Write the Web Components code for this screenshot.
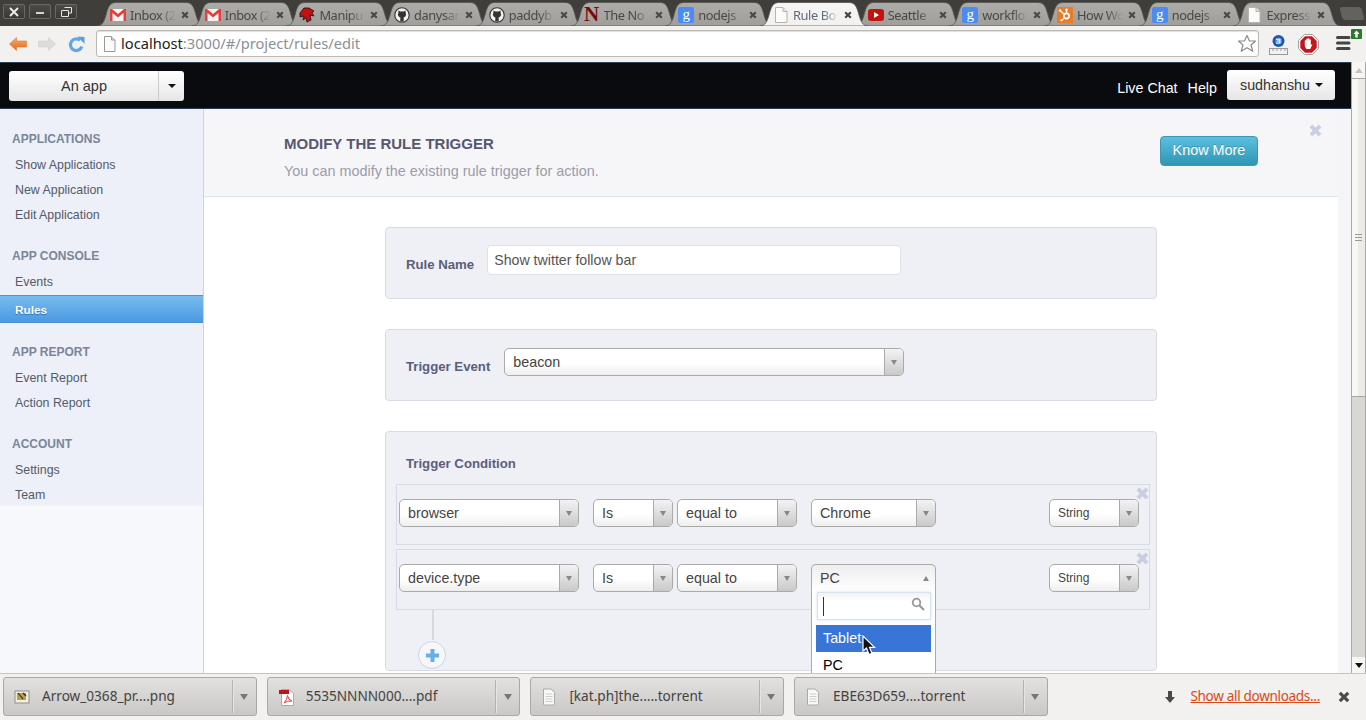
<!DOCTYPE html>
<html lang="en"><head><meta charset="utf-8"><title>Rule Box</title>
<style>
html,body{margin:0;height:720px;overflow:hidden;background:#f2f1f0}
body{display:flex;flex-direction:column;width:1366px;font-family:"Liberation Sans",Arial,sans-serif}
</style></head><body>
<x-tabstrip>
  <x-tab label="Inbox (2" icon="gmail"></x-tab>
  <x-tab label="Inbox (2" icon="gmail"></x-tab>
  <x-tab label="Manipu" icon="dragon"></x-tab>
  <x-tab label="danysar" icon="github"></x-tab>
  <x-tab label="paddyb" icon="github"></x-tab>
  <x-tab label="The No" icon="n"></x-tab>
  <x-tab label="nodejs" icon="g"></x-tab>
  <x-tab label="Rule Bo" icon="page" active></x-tab>
  <x-tab label="Seattle" icon="yt"></x-tab>
  <x-tab label="workflo" icon="g"></x-tab>
  <x-tab label="How Wo" icon="hub"></x-tab>
  <x-tab label="nodejs" icon="g"></x-tab>
  <x-tab label="Express" icon="page"></x-tab>
</x-tabstrip>
<x-toolbar></x-toolbar>
<x-viewport>
  <x-navbar></x-navbar>
  <x-shell>
    <x-sidebar slot="side">
      <x-side-group title="APPLICATIONS">
        <x-side-item>Show Applications</x-side-item>
        <x-side-item>New Application</x-side-item>
        <x-side-item>Edit Application</x-side-item>
      </x-side-group>
      <x-side-group title="APP CONSOLE">
        <x-side-item>Events</x-side-item>
        <x-side-item active>Rules</x-side-item>
      </x-side-group>
      <x-side-group title="APP REPORT">
        <x-side-item>Event Report</x-side-item>
        <x-side-item>Action Report</x-side-item>
      </x-side-group>
      <x-side-group title="ACCOUNT">
        <x-side-item>Settings</x-side-item>
        <x-side-item>Team</x-side-item>
      </x-side-group>
    </x-sidebar>
    <x-hero></x-hero>
    <x-form-area>
      <x-card h="72">
        <x-field label="Rule Name" style="padding:17px 0 0 20px;--label-top:11px;--label-gap:13px"><x-textbox>Show twitter follow bar</x-textbox></x-field>
      </x-card>
      <x-card h="72">
        <x-field label="Trigger Event" style="padding:18px 0 0 20px;--label-top:10px;--label-gap:14px"><x-select style="width:400px">beacon</x-select></x-field>
      </x-card>
      <x-card h="240">
        <x-cond-title>Trigger Condition</x-cond-title>
        <x-cond-row>
          <x-select style="width:180px">browser</x-select>
          <x-select style="width:80px;margin-left:14px">Is</x-select>
          <x-select style="width:120px;margin-left:4px">equal to</x-select>
          <x-select style="width:125px;margin-left:14px">Chrome</x-select>
          <x-select small style="width:90px;margin-left:auto">String</x-select>
        </x-cond-row>
        <x-cond-row>
          <x-select style="width:180px">device.type</x-select>
          <x-select style="width:80px;margin-left:14px">Is</x-select>
          <x-select style="width:120px;margin-left:4px">equal to</x-select>
          <x-select open style="width:125px;margin-left:14px">PC</x-select>
          <x-select small style="width:90px;margin-left:auto">String</x-select>
        </x-cond-row>
        <x-add-cond></x-add-cond>
      </x-card>
    </x-form-area>
  </x-shell>
  <x-scrollbar></x-scrollbar>
</x-viewport>
<x-dlbar>
  <x-dl icon="img">Arrow_0368_pr....png</x-dl>
  <x-dl icon="pdf">5535NNNN000....pdf</x-dl>
  <x-dl icon="doc">[kat.ph]the.....torrent</x-dl>
  <x-dl icon="doc">EBE63D659....torrent</x-dl>
</x-dlbar>
<script>
function def(name,render){
  customElements.define(name,class extends HTMLElement{
    constructor(){super();this.attachShadow({mode:'open'})}
    connectedCallback(){this.shadowRoot.innerHTML=render(this)}
  });
}
const UI='"Noto Sans","Open Sans",sans-serif';
const XICON=(c,s=10,w=2.6)=>`<svg width="${s}" height="${s}" viewBox="0 0 10 10" style="display:block"><path d="M1.500 1.500L8.500 8.500M8.500 1.500L1.500 8.500" stroke="${c}" stroke-width="${w}" fill="none"/></svg>`;
const PAGE=`<svg width="16" height="16" viewBox="0 0 16 16" style="display:block"><path d="M2.500 .5H10L14 4.500V15.500H2.500Z" fill="#fbfbfa" stroke="#b4b4b0"/><path d="M10 .5V4.500H14" fill="#e4e4e2" stroke="#b4b4b0"/></svg>`;
const ICONS={
 gmail:`<svg width="16" height="16" viewBox="0 0 16 16" style="display:block"><rect y="2" width="16" height="12" fill="#f4f4f4"/><path d="M0 2H2L8 7L14 2H16V14H13.500V6L8 10.500L2.500 6V14H0Z" fill="#e2403a"/></svg>`,
 dragon:`<svg width="16" height="16" viewBox="0 0 16 16" style="display:block"><path d="M1 6L5 1L10 1L15 4L13 6L15 9L11 8L12 13L8 15L7 11L4 13L5 9L1 10Z" fill="#c41010" stroke="#111" stroke-width=".8"/></svg>`,
 github:`<svg width="16" height="16" viewBox="0 0 16 16" style="display:block"><circle cx="8" cy="8" r="7.200" fill="#f2f1f0" stroke="#333" stroke-width="1.100"/><path d="M4.500 3.500L6.300 4.600Q8 4.200 9.700 4.600L11.500 3.500L11.700 6Q12.500 7.500 11.700 9Q10.800 10.300 9.600 10.500L9.800 14.500H6.200L6.400 10.500Q5.200 10.300 4.300 9Q3.500 7.500 4.300 6Z" fill="#333"/></svg>`,
 n:`<span style="display:block;width:16px;height:16px;margin-top:-2px;font:bold 21px/18px 'Liberation Serif',serif;color:#7a0a0a;text-align:center">N</span>`,
 g:`<span style="display:block;width:16px;height:16px;border-radius:2px;background:#4a8cf3;font:15px/15px 'Liberation Serif',serif;color:#fff;text-align:center">g</span>`,
 page:PAGE,
 yt:`<svg width="16" height="16" viewBox="0 0 16 16" style="display:block"><rect y="2" width="16" height="12" rx="3" fill="#c5120f"/><path d="M6 5L11 8L6 11Z" fill="#fff"/></svg>`,
 hub:`<svg width="16" height="16" viewBox="0 0 16 16" style="display:block"><rect width="16" height="16" fill="#ee7a26"/><circle cx="9.500" cy="9" r="2.600" fill="none" stroke="#fff" stroke-width="1.600"/><path d="M9.500 6V3M7.500 7.500L3.500 4M7.600 11L5 13" stroke="#fff" stroke-width="1.400"/><circle cx="9.500" cy="2.800" r="1.200" fill="#fff"/><circle cx="3" cy="3.500" r="1.200" fill="#fff"/><circle cx="4.500" cy="13.200" r="1.100" fill="#fff"/></svg>`
};
def('x-tabstrip',()=>`<style>
:host{display:flex;flex:0 0 26px;height:26px;background:#3f3e3a;box-sizing:border-box;position:relative;overflow:hidden}
.wb{display:flex;gap:4px;padding:4px 0 0 3px;flex:0 0 auto;margin-right:20px}
.b{width:22px;height:15px;box-sizing:border-box;border:1px solid #6a6964;border-radius:2px;background:linear-gradient(#4c4b47,#3a3935);display:flex;align-items:center;justify-content:center}
.new{width:22px;height:13px;margin:7px 0 0 13px;background:#63625e;transform:skewX(15deg);border-radius:3px;flex:0 0 auto}
</style><div class="wb">
<div class="b"><svg width="10" height="10" viewBox="0 0 10 10"><path d="M1 1L9 9M9 1L1 9" stroke="#f0efec" stroke-width="1.800"/></svg></div>
<div class="b"><svg width="10" height="10" viewBox="0 0 10 10"><path d="M1 6H9" stroke="#e8e7e3" stroke-width="1.800"/></svg></div>
<div class="b"><svg width="11" height="10" viewBox="0 0 11 10"><path d="M3.500 .5H10.500V6H7.500M.5 3.500H7.500V9.500H.5Z" fill="none" stroke="#e8e7e3"/></svg></div>
</div><slot></slot><div class="new"></div>`);
def('x-tab',h=>{const a=h.hasAttribute('active');return `<style>
:host{display:block;position:relative;flex:0 0 108px;width:108px;height:24px;margin:2px -13.3px 0 0;${a?'z-index:3':''}}
svg.bg{position:absolute;inset:0;width:108px;height:24px}
.in{position:relative;display:flex;align-items:center;height:24px;padding:2px 0 0 13px;box-sizing:border-box}
.ic{flex:0 0 16px;width:16px;height:16px;margin-right:4px}
.t{flex:0 0 46px;width:46px;overflow:hidden;white-space:nowrap;font:12.800px/22px ${UI};letter-spacing:-.4px;color:${a?'#5d6a7c':'#4a4843'};-webkit-mask-image:linear-gradient(90deg,#000 65%,transparent);mask-image:linear-gradient(90deg,#000 65%,transparent)}
.x{margin-left:5px}
</style><svg class="bg" viewBox="0 0 108 24" preserveAspectRatio="none"><defs><linearGradient id="tg" x1="0" y1="0" x2="0" y2="1"><stop offset="0" stop-color="${a?'#f6f5f4':'#aeaca8'}"/><stop offset="1" stop-color="${a?'#f2f1f0':'#a09e9a'}"/></linearGradient></defs><path d="M0 24C5 24 7 20 9 13C11 5 13 .5 19 .5H89C95 .5 97 5 99 13C101 20 103 24 108 24Z" fill="url(#tg)" stroke="#55544f" stroke-width=".8"/></svg>
<div class="in"><span class="ic">${ICONS[h.getAttribute('icon')]||''}</span><span class="t">${h.getAttribute('label')}</span><span class="x">${XICON(a?'#444':'#4a4843',8)}</span></div>`});
def('x-toolbar',()=>`<style>
:host{display:flex;flex:0 0 36px;height:36px;background:#f2f1f0;align-items:center;box-sizing:border-box;position:relative}
.nav{display:flex;flex:0 0 96px;align-items:center;padding-left:9px;box-sizing:border-box;gap:11px}
.omni{flex:0 0 1163px;height:27px;align-self:flex-start;margin-top:4px;box-sizing:border-box;background:#fff;border:1px solid #bdbab5;border-radius:3px;display:flex;align-items:center;padding-left:6px;box-shadow:inset 0 1px 1px #ddd}
.u{font:14.650px/25px ${UI};color:#222;white-space:nowrap;padding-left:5px}.u i{font-style:normal;color:#8a909a}
.star{margin-left:auto;margin-right:1px}
.ext{display:flex;align-items:center;margin-left:9px}
</style>
<div class="nav">
<svg width="18" height="16" viewBox="0 0 18 16"><defs><linearGradient id="o" x1="0" y1="0" x2="0" y2="1"><stop offset="0" stop-color="#f7b06a"/><stop offset="1" stop-color="#e0671c"/></linearGradient></defs><path d="M.5 8L7.500 1.500V5H17.500V11H7.500V14.500Z" fill="url(#o)" stroke="#d9782c" stroke-width=".6" stroke-linejoin="round"/></svg>
<svg width="18" height="16" viewBox="0 0 18 16"><path d="M17.500 8L10.500 1.500V5H.5V11H10.500V14.500Z" fill="#dddcda" stroke="#d2d1cf" stroke-width=".6" stroke-linejoin="round"/></svg>
<svg width="17" height="17" viewBox="0 0 17 17" style="margin-left:1px"><path d="M13.800 10.500A5.800 5.800 0 1 1 12 4.300" fill="none" stroke="#62a6e4" stroke-width="3.200"/><path d="M9.500 .5L16.500 1V8Z" fill="#5a9ee0"/></svg>
</div>
<div class="omni"><svg width="13" height="16" viewBox="0 0 13 16"><path d="M1.500 .5H8.500L12 4V15.500H1.500Z" fill="#fbfbfa" stroke="#999"/><path d="M8.500 .5V4H12" fill="#ddd" stroke="#999"/></svg><span class="u">localhost<i>:3000/#/project/rules/edit</i></span>
<svg class="star" width="20" height="19" viewBox="0 0 20 19"><path d="M10 1.500L12.500 7H18.500L14 11L15.800 17.300L10 13.800L4.200 17.300L6 11L1.500 7H7.500Z" fill="#fff" stroke="#8a8a86" stroke-width="1.200" stroke-linejoin="round"/></svg></div>
<div class="ext">
<svg width="21" height="21" viewBox="0 0 21 21" style="margin-top:2px"><circle cx="10.500" cy="6" r="6" fill="#1c56a6"/><circle cx="10.500" cy="6" r="3.600" fill="#3f86d8"/><path d="M8 3.800H12.500V8.500H8V7.500H11.200V6.500H8.800V5.500H11.200V4.800H8Z" fill="#fff"/><path d="M1 13.500H20M1 19.500H20" stroke="#9a9a96"/><path d="M1.500 13V20M19.500 13V20M5 14V16M9 14V16M13 14V16M17 14V16" stroke="#9a9a96"/></svg>
<svg width="21" height="21" viewBox="0 0 21 21" style="margin-left:9px"><path d="M6.500 .5H14.500L20.500 6.500V14.500L14.500 20.500H6.500L.5 14.500V6.500Z" fill="#fff" stroke="#8c8c8c" stroke-width=".8"/><path d="M7 2.300H14L18.700 7V14L14 18.700H7L2.300 14V7Z" fill="#c8141c"/><path d="M6.800 9.500V6.500Q7.600 5.500 8.300 6.500V5Q9.100 4 9.800 5V4.600Q10.600 3.800 11.300 4.600V5.500Q12.100 4.800 12.800 5.700V11Q13.800 10 14.300 10.500L12.300 15H8.300L6.800 12Z" fill="#fff"/></svg>
<svg width="28" height="36" viewBox="0 0 28 36" style="margin-left:17px;flex:0 0 28px"><path d="M1.500 11.500H13M1.500 17H13M1.500 22.500H13" stroke="#444" stroke-width="3" stroke-linecap="round"/><rect x="15" y="3" width="11" height="10" rx="1" fill="#2c7a2c"/><path d="M20.500 4.500L23.500 8H21.700V11.500H19.300V8H17.500Z" fill="#fff"/></svg>
</div>`);
def('x-viewport',()=>`<style>:host{display:flex;flex:0 0 611px;height:611px;position:relative;overflow:hidden;background:#f5f5f7}
.main{flex:0 0 1351px;width:1351px;display:flex;flex-direction:column;min-width:0;overflow:hidden}
</style><div class="main"><slot></slot></div>`);
def('x-navbar',()=>`<style>
:host{display:flex;flex:0 0 47px;height:47px;box-sizing:border-box;background:#0a0b0e;border-top:1px solid #2e4058;border-bottom:1px solid #2a3a52;align-items:center;padding-left:9px;padding-right:16px;color:#fff;font:14px "Liberation Sans",sans-serif}
.grp{display:flex;height:30px;width:175px;box-sizing:border-box;border-radius:3px;background:linear-gradient(#fff,#e6e6e6);color:#333;font-size:14.500px;line-height:31px;margin-top:1px}
.main{flex:1;text-align:center;padding-left:1px;border-right:1px solid #ccc;box-sizing:border-box}
.cv{flex:0 0 25px;display:flex;align-items:center;justify-content:center}
.tri{width:0;height:0;border:4px solid transparent;border-top-color:#111;border-bottom:0}
a{color:#fff;font-size:14.300px;margin-top:4px}
.r{margin-left:auto;display:flex;align-items:center;gap:10px}
.me{margin-top:-1px;width:108px;height:30px;box-sizing:border-box;border-radius:3px;background:linear-gradient(#fff,#e6e6e6);color:#333;display:flex;align-items:center;padding-left:13px;gap:5px;font-size:14.300px}
</style><div class="grp"><div class="main">An app</div><div class="cv"><div class="tri"></div></div></div>
<div class="r"><a>Live Chat</a><a>Help</a><div class="me">sudhanshu<div class="tri"></div></div></div>`);
def('x-shell',()=>`<style>:host{display:grid;grid-template-columns:204px 1134px;grid-template-rows:auto 1fr;flex:1;min-height:0;overflow:hidden}
.s{grid-row:1/3;display:block}
</style><div class="s"><slot name="side"></slot></div><slot></slot>`);
def('x-sidebar',()=>`<style>:host{display:block;height:100%;box-sizing:border-box;border-right:1px solid #c9d3e1;background:linear-gradient(#edf0f8 396px,#f7f8fb 397px);padding-top:20px}</style><slot></slot>`);
def('x-side-group',h=>`<style>:host{display:block;margin-bottom:19px}
.t{font:bold 12px/20px "Liberation Sans",sans-serif;color:#7a8598;padding-left:12px;margin-bottom:3px}
.b{display:block}</style><div class="t">${h.getAttribute('title')}</div><div class="b"><slot></slot></div>`);
def('x-side-item',h=>h.hasAttribute('active')?`<style>:host{display:block;height:28px;margin-top:1px;box-sizing:border-box;border-top:1px solid #4d94d8;border-bottom:1px solid #4a8fd4;background:linear-gradient(#76bcee,#4c99e2);padding-left:15px;font:bold 11.800px/28px "Liberation Sans",sans-serif;color:#fff;text-shadow:0 1px 1px #2f6fb0}</style><slot></slot>`:`<style>:host{display:block;height:25px;padding-left:15px;font:12.400px/27px "Liberation Sans",sans-serif;color:#555a6a;white-space:nowrap}</style><slot></slot>`);
def('x-hero',()=>`<style>:host{display:block;position:relative;height:88px;box-sizing:border-box;background:#f6f6f9;border-bottom:1px solid #d9e6ec;padding:26px 0 0 80px}
h1{margin:0;font:bold 15px/18px "Liberation Sans",sans-serif;color:#55586f}
p{margin:9px 0 0;font:14.400px/18px "Liberation Sans",sans-serif;color:#9a9ca9}
.btn{position:absolute;left:956px;top:27px;width:98px;height:30px;box-sizing:border-box;border:1px solid #3f97b3;border-radius:4px;background:linear-gradient(#5cbfe0,#2f96b4);color:#fff;font:14.400px/26px "Liberation Sans",sans-serif;text-align:center;text-shadow:0 -1px 0 rgba(0,0,0,.2)}
.x{position:absolute;left:1105px;top:15px}
</style><h1>MODIFY THE RULE TRIGGER</h1><p>You can modify the existing rule trigger for action.</p><div class="btn">Know More</div><div class="x">${XICON('#c9cfe0',13,3)}</div>`);
def('x-form-area',()=>`<style>:host{display:flex;flex-direction:column;gap:30px;padding:30px 0 0 181px;background:#fff;height:100%;box-sizing:border-box}</style><slot></slot>`);
def('x-card',h=>`<style>:host{display:block;position:relative;flex:0 0 ${h.getAttribute('h')}px;height:${h.getAttribute('h')}px;width:772px;box-sizing:border-box;background:#eff0f5;border:1px solid #d8dae4;border-radius:4px;padding:0 6px 0 10px}</style><slot></slot>`);
def('x-field',h=>`<style>:host{display:flex;align-items:flex-start;margin-left:-10px}
label{font:bold 13.200px/18px "Liberation Sans",sans-serif;color:#5a5e7e;margin-top:var(--label-top);margin-right:var(--label-gap);white-space:nowrap}</style><label>${h.getAttribute('label')}</label><slot></slot>`);
def('x-textbox',()=>`<style>:host{display:block;width:414px;height:30px;box-sizing:border-box;background:#fff;border:1px solid #dfe1e8;border-radius:4px;font:14.200px/28px "Liberation Sans",sans-serif;color:#555;padding-left:6px}</style><slot></slot>`);
def('x-select',h=>{const sm=h.hasAttribute('small'),op=h.hasAttribute('open');return `<style>
:host{display:block;position:relative;height:28px;flex:0 0 auto;font:${sm?'12px':'14.300px'}/26px "Liberation Sans",sans-serif;color:#444}
.box{display:flex;height:28px;box-sizing:border-box;border:1px solid #aaa;border-radius:5px;background:${op?'linear-gradient(#eee,#fff)':'linear-gradient(#fff 55%,#eee)'};${op?'border-bottom:0;border-radius:5px 5px 0 0':''}}
.v{flex:1;padding-left:8px;white-space:nowrap;overflow:hidden}
.ar{flex:0 0 18px;display:flex;align-items:center;justify-content:center;${op?'':'border-left:1px solid #aaa;background:linear-gradient(#f3f3f3,#c9c9c9);border-radius:0 4px 4px 0'}}
.c{width:0;height:0;border:3.500px solid transparent;${op?'border-bottom:5px solid #888;border-top:0':'border-top:5px solid #888;border-bottom:0'}}
.drop{position:absolute;left:0;top:28px;width:100%;height:120px;box-sizing:border-box;background:#fff;border:1px solid #aaa;border-top:0;padding:0 4px;font-size:14.300px}
.s{height:28px;box-sizing:border-box;margin:0 0 5px 1px;border:1px solid #d4e4f0;box-shadow:0 0 3px #cfe3f5;background:linear-gradient(#f2f2f2,#fff 30%);position:relative}
.caret{position:absolute;left:5px;top:4px;width:1px;height:19px;background:#333}
.mag{position:absolute;right:5px;top:4px}
.o{height:27px;line-height:26px;padding-left:7px;color:#000}
.o.on{background:#3875d7;color:#fff}
.cur{position:absolute;left:50px;top:43px;z-index:2}
</style><div class="box"><div class="v"><slot></slot></div><div class="ar"><div class="c"></div></div></div>
${op?`<div class="drop"><div class="s"><div class="caret"></div><svg class="mag" width="14" height="14" viewBox="0 0 14 14"><circle cx="5.500" cy="5.500" r="3.800" fill="none" stroke="#999" stroke-width="1.800"/><path d="M8.500 8.500L13 13" stroke="#999" stroke-width="2.200"/></svg></div><div class="o on">Tablet</div><div class="o">PC</div><svg class="cur" width="14" height="21" viewBox="0 0 14 21"><path d="M1 1V16L4.500 13L7 19.500L10 18.300L7.500 12.300H12.500Z" fill="#111" stroke="#fff" stroke-width="1.200"/></svg></div>`:''}`});
def('x-cond-title',()=>`<style>:host{display:block;height:52px;padding:23px 0 0 10px;box-sizing:border-box;font:bold 13.200px/18px "Liberation Sans",sans-serif;color:#5a5e7e}</style><slot></slot>`);
def('x-cond-row',()=>`<style>:host{display:flex;position:relative;width:754px;height:61px;box-sizing:border-box;border:1px solid #d8dae4;padding:14px 10px 0 2px;margin-bottom:4px}
.x{position:absolute;right:0;top:2px}</style><slot></slot><div class="x">${XICON('#c9cfe0',13,3)}</div>`);
def('x-add-cond',()=>`<style>:host{display:block;margin:-4px 0 0 32px}
.l{width:2px;height:30px;background:#d6d8e2;margin-left:4px}
.c{width:28px;height:28px;box-sizing:border-box;margin-left:-10px;margin-top:1px;border:1px solid #c6d6e2;border-radius:50%;background:#f5f7fa;display:flex;align-items:center;justify-content:center}
</style><div class="l"></div><div class="c"><svg width="15" height="15" viewBox="0 0 15 15"><path d="M7.500 1V14M1 7.500H14" stroke="#68aee8" stroke-width="4"/></svg></div>`);
def('x-scrollbar',()=>`<style>:host{position:absolute;right:0;top:0;width:15px;height:611px;display:flex;flex-direction:column;box-sizing:border-box;border-left:1px solid #aaa9a5;border-right:1px solid #aaa9a5;background:#d8d7d4}
.b{flex:0 0 16px;display:flex;align-items:center;justify-content:center;background:#f7f6f5}
.t{flex:0 0 319px;box-sizing:border-box;background:linear-gradient(90deg,#f8f7f5 50%,#ecebe8 50%);border:1px solid #a8a7a3;border-width:1px 0;display:flex;align-items:center;justify-content:center}
.g{width:7px;height:7px;background:repeating-linear-gradient(#999 0 1px,transparent 1px 3px)}
.sp{flex:1}
.up{border:4px solid transparent;border-bottom:5px solid #c4c3c0;border-top:0}
.dn{border:4px solid transparent;border-top:5px solid #111;border-bottom:0}
</style><div class="b"><div class="up"></div></div><div class="t"><div class="g"></div></div><div class="sp"></div><div class="b"><div class="dn"></div></div>`);
const DLI={
 img:`<svg width="16" height="16" viewBox="0 0 16 16" style="display:block"><rect x="1" y="2" width="14" height="12" fill="#f2efe2" stroke="#8f8f85"/><rect x="3" y="4" width="9" height="7" fill="#b99f48"/><path d="M4 4L9 10M9 4L12 7" stroke="#222" stroke-width="1.100"/></svg>`,
 pdf:`<svg width="18" height="18" viewBox="0 0 18 18" style="display:block"><path d="M3.500 1.500H11L15.500 5.500V17.500H3.500Z" fill="#fff" stroke="#aaa"/><rect x="1" y="2" width="10" height="4" fill="#c4121a"/><path d="M6 15Q9 12 9.500 7.500Q10 12 14 13Q9 12.500 6 15Z" fill="none" stroke="#e03a3a"/></svg>`,
 doc:`<svg width="16" height="18" viewBox="0 0 16 18" style="display:block"><path d="M2.500 1H10L13.500 4.500V16.500Q13.500 17 13 17H3Q2.500 17 2.500 16.500Z" fill="#f8f8f6" stroke="#aaa"/><path d="M4.500 6H11.500M4.500 8.500H11.500M4.500 11H11.500M4.500 13.500H11.500" stroke="#ccc"/></svg>`};
def('x-dlbar',()=>`<style>:host{display:flex;flex:0 0 47px;height:47px;box-sizing:border-box;border-top:1px solid #c6c5c2;background:#f2f1f0;padding:3px 0 0 3px;gap:10.200px;position:relative;z-index:5}
.r{margin-left:auto;display:flex;align-items:center;height:39px;font:13.500px ${UI};color:#dd4814;white-space:nowrap;padding-right:16px}
.r u{margin:0 18px 0 14px;letter-spacing:-.3px;position:relative;top:-1px}
</style><slot></slot><div class="r"><svg width="12" height="14" viewBox="0 0 12 14"><path d="M4 1H8V7H11L6 13L1 7H4Z" fill="#4a4a47"/></svg><u>Show all downloads...</u>${XICON('#4a4a47',12)}</div>`);
def('x-dl',h=>`<style>:host{display:flex;flex:0 0 253.500px;width:253.500px;height:39px;box-sizing:border-box;border:1px solid #a9a8a4;border-radius:3px;background:linear-gradient(#e2e1df,#c9c8c6);align-items:center;font:13.600px ${UI};color:#44433f}
.i{flex:0 0 18px;margin-left:10px;margin-right:10px}
.t{flex:1;white-space:nowrap;overflow:hidden;padding-bottom:2px}
.s{width:1px;height:33px;background:#b3b2ae;box-shadow:1px 0 0 #e6e5e3}
.c{flex:0 0 23px;display:flex;justify-content:center}.tr{border:4px solid transparent;border-top:6px solid #777;border-bottom:0}
</style><span class="i">${DLI[h.getAttribute('icon')]}</span><span class="t"><slot></slot></span><span class="s"></span><span class="c"><span class="tr"></span></span>`);
</script>
</body></html>
